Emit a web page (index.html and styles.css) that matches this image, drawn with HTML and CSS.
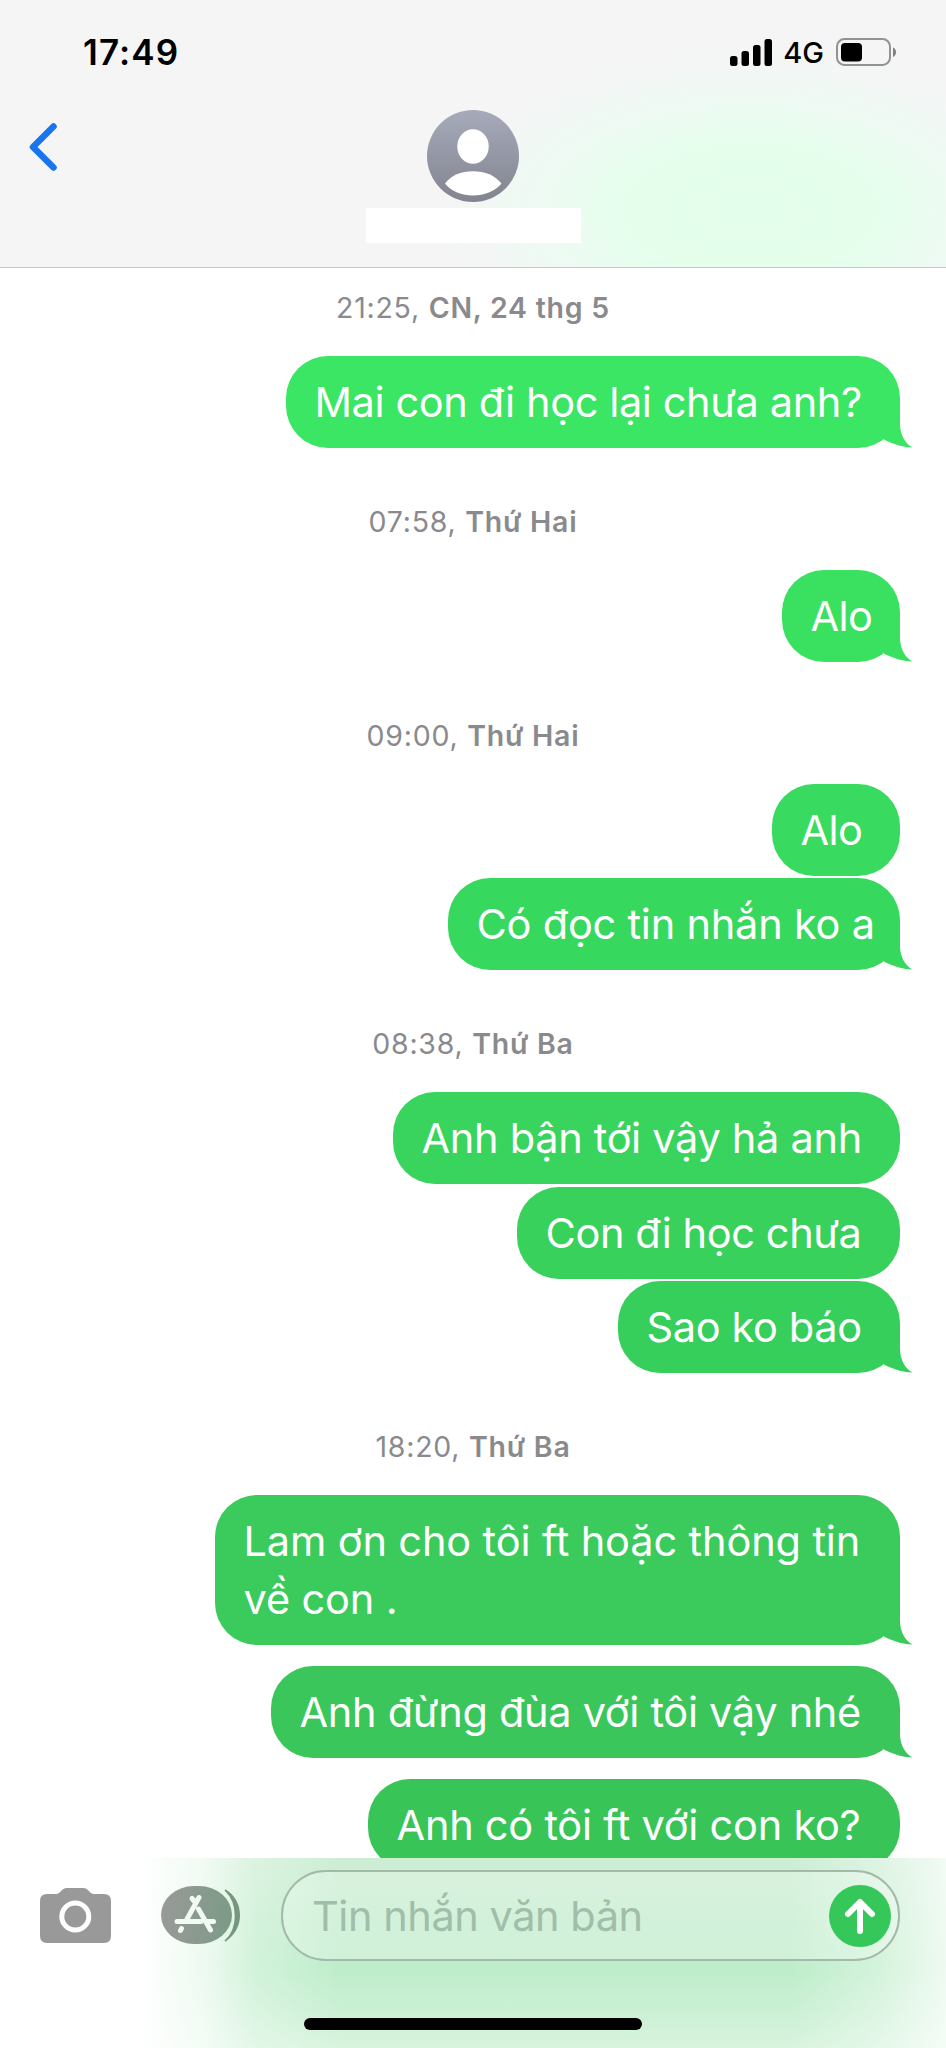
FILE: index.html
```html
<!DOCTYPE html>
<html lang="vi">
<head>
<meta charset="utf-8">
<title>Tin nhắn</title>
<link rel="stylesheet" href="styles.css">
</head>
<body>
<svg width="0" height="0" class="defs" aria-hidden="true">
  <symbol id="tail" viewBox="0 0 43 42"><path d="M30 0V19C30.500 29 35 37.500 42.500 41.500C34 41.500 24 38.500 14.500 34L5 20V0Z"/></symbol>
</svg>
<div class="phone">
  <header class="header">
    <div class="status">
      <span class="time">17:49</span>
      <span class="indicators">
        <svg class="signal" width="43" height="28" viewBox="0 0 43 28"><rect x="0" y="18" width="7.500" height="10" rx="2.500"/><rect x="11.500" y="13" width="7.500" height="15" rx="2.500"/><rect x="23" y="7" width="7.500" height="21" rx="2.500"/><rect x="34.500" y="1" width="7.500" height="27" rx="2.500"/></svg>
        <span class="network">4G</span>
        <svg width="61" height="28" viewBox="0 0 61 28"><rect x="1" y="1" width="53" height="26" rx="7.500" fill="none" stroke="#929292" stroke-width="2"/><rect x="5" y="5" width="21" height="18.500" rx="4" fill="#000"/><path d="M57 9.500C61 11 61 17.500 57 19Z" fill="#808080"/></svg>
      </span>
    </div>
    <div class="nav">
      <svg class="back" width="32" height="52" viewBox="0 0 32 52"><path d="M26.500 5.500L6 26L26.500 46.500" fill="none" stroke="#1a74ee" stroke-width="6.500" stroke-linecap="round" stroke-linejoin="round"/></svg>
      <div class="contact">
        <svg width="92" height="92" viewBox="0 0 92 92">
          <defs><linearGradient id="av" x1="0" y1="0" x2="0" y2="1"><stop offset="0" stop-color="#a6aaba"/><stop offset="1" stop-color="#82858f"/></linearGradient></defs>
          <circle cx="46" cy="46" r="46" fill="url(#av)"/>
          <rect x="30.300" y="19.300" width="31.400" height="34.500" rx="15.700" ry="17" fill="#fff"/>
          <path d="M18 73.500C24 65.500 34 61.300 46 61.300S68 65.500 74.500 73.500C68 81.500 57 85.500 46 85.500S24 81.500 18 73.500Z" fill="#fff"/>
        </svg>
        <div class="name"></div>
      </div>
    </div>
  </header>

  <main class="thread">
    <div class="stamp">21:25, <b>CN, 24 thg 5</b></div>
    <div class="bubble c1">Mai con đi học lại chưa anh?<svg class="tail"><use href="#tail"/></svg></div>
    <div class="stamp">07:58, <b>Thứ Hai</b></div>
    <div class="bubble c2">Alo<svg class="tail"><use href="#tail"/></svg></div>
    <div class="stamp">09:00, <b>Thứ Hai</b></div>
    <div class="bubble c3">Alo</div>
    <div class="bubble c4">Có đọc tin nhắn ko a<svg class="tail"><use href="#tail"/></svg></div>
    <div class="stamp">08:38, <b>Thứ Ba</b></div>
    <div class="bubble c5">Anh bận tới vậy hả anh</div>
    <div class="bubble c6">Con đi học chưa</div>
    <div class="bubble c7">Sao ko báo<svg class="tail"><use href="#tail"/></svg></div>
    <div class="stamp">18:20, <b>Thứ Ba</b></div>
    <div class="bubble c8">Lam ơn cho tôi ft hoặc thông tin<br>về con .<svg class="tail"><use href="#tail"/></svg></div>
    <div class="bubble c9 spaced">Anh đừng đùa với tôi vậy nhé<svg class="tail"><use href="#tail"/></svg></div>
    <div class="bubble c10 spaced">Anh có tôi ft với con ko?</div>
  </main>

  <footer class="composer">
    <div class="tools">
      <svg class="camera" width="72" height="56" viewBox="0 0 72 56"><path d="M7 7H16C21 7 21 1 27 1H43C49 1 49 7 54 7H64Q71 7 71 14V49Q71 56 64 56H7Q0 56 0 49V14Q0 7 7 7Z" fill="#999"/><circle cx="35.300" cy="29.500" r="13.500" fill="none" stroke="#fff" stroke-width="5"/></svg>
      <svg class="apps" width="80" height="58" viewBox="0 0 80 58">
        <defs><linearGradient id="ap"><stop offset="0" stop-color="#999"/><stop offset="1" stop-color="#7c9b86"/></linearGradient></defs>
        <rect width="71" height="58" rx="33" ry="29" fill="url(#ap)"/>
        <path d="M64 4C83 15 83 43 64 55C78 43 78 17 64 4Z" fill="#76967f" stroke="#76967f" stroke-width="1.500"/>
        <g fill="none" stroke="#f2faf4" stroke-width="5" stroke-linecap="round"><path d="M16 35.500H32M45 35.500H52.500M31 12.500L34 16M38 11.500L25.500 34M37.500 23L49.500 44M20.500 42.500L19.500 44.500M27 35.500H40"/></g>
      </svg>
    </div>
    <div class="field">
      <span class="placeholder">Tin nhắn văn bản</span>
      <svg width="62" height="62" viewBox="0 0 62 62"><circle cx="31" cy="31" r="31" fill="#35c759"/><path d="M31 46V17.500M19 29L31 17L43 29" fill="none" stroke="#fff" stroke-width="6" stroke-linecap="round" stroke-linejoin="round"/></svg>
    </div>
    <div class="home"></div>
  </footer>
</div>
</body>
</html>
```
FILE: styles.css
```css
* { box-sizing: border-box; }
body { margin: 0; background: #fff; font-family: Inter, "Noto Sans", sans-serif; }
.defs { display: block; }
.phone { width: 946px; height: 2048px; display: flex; flex-direction: column; overflow: hidden; }

.header {
  height: 268px;
  flex: none;
  border-bottom: 1px solid #c6c8c7;
  background:
    radial-gradient(ellipse 310px 160px at 750px 210px, #e3feeb 0%, #e6feed 45%, rgba(236, 252, 242, .75) 68%, rgba(245, 246, 246, 0) 100%),
    #f5f5f6;
}
.status { height: 104px; display: flex; justify-content: space-between; align-items: center; padding: 0 49px 0 83px; }
.time { font-size: 35px; font-weight: 600; letter-spacing: 1.100px; }
.indicators { display: flex; align-items: center; }
.network { font-size: 29px; font-weight: 500; margin: 0 12px 0 10.500px; }
.nav { display: grid; grid-template-columns: 1fr auto 1fr; padding-top: 6px; }
.back { margin: 11px 0 0 27px; }
.contact { display: flex; flex-direction: column; align-items: center; gap: 6px; }
.name { width: 215px; height: 35px; background: #fff; }

.thread { height: 1590px; flex: none; overflow: hidden; display: flex; flex-direction: column; align-items: flex-end; padding: 22px 46px 0 0; }
.stamp { align-self: stretch; margin: 56.300px 0 30px; padding-left: 46px; height: 36px; flex: none; text-align: center; line-height: 36px; font-size: 28.500px; letter-spacing: .75px; color: #8a8a8e; }
.stamp:first-child { margin-top: 0; }
.stamp b { font-weight: 600; }
.bubble {
  position: relative;
  flex: none;
  min-height: 91.700px;
  padding: 17px 0 16.700px 28.500px;
  border-radius: 42px;
  font-size: 41.500px;
  line-height: 58px;
  color: #fff;
  white-space: nowrap;
}
.bubble + .bubble { margin-top: 2.800px; }
.bubble.spaced { margin-top: 20.900px; }
.tail { position: absolute; right: -13px; bottom: 0; width: 43px; height: 42px; fill: currentColor; }
.c1 { width: 614px; letter-spacing: -.39px; background: #3ae663; }
.c1 .tail { color: #3ae663; }
.c2 { width: 118px; letter-spacing: -.6px; background: #3ae161; }
.c2 .tail { color: #3ae161; }
.c3 { width: 128px; letter-spacing: -.6px; background: #38db5f; }
.c4 { width: 452px; letter-spacing: -.22px; background: #36d95e; }
.c4 .tail { color: #36d95e; }
.c5 { width: 507px; letter-spacing: -.3px; background: #38d45d; }
.c6 { width: 383px; letter-spacing: -.4px; background: #38d15c; }
.c7 { width: 282px; letter-spacing: -.37px; background: #37cf5b; }
.c7 .tail { color: #37cf5b; }
.c8 { width: 685px; letter-spacing: -.13px; background: #3acb5c; }
.c8 .tail { color: #3acb5c; }
.c9 { width: 629px; letter-spacing: -.3px; background: #3ac65a; }
.c9 .tail { color: #3ac65a; }
.c10 { width: 532px; letter-spacing: -.25px; background: #38c457; }

.composer {
  height: 190px;
  flex: none;
  display: grid;
  grid-template: 102px 1fr / 281px 619px;
  background:
    linear-gradient(90deg, #fff 140px, rgba(255,255,255,.72) 205px, rgba(255,255,255,.3) 255px, rgba(255,255,255,0) 340px, rgba(255,255,255,0) 790px, rgba(255,255,255,.35) 880px, rgba(255,255,255,.75) 946px),
    linear-gradient(180deg, #cdeed5 0, #c4edce 60px, #beedca 112px, #caf0d4 150px, #d8f4de 190px);
}
.tools { display: flex; align-items: flex-start; padding: 28px 0 0 40px; gap: 49px; }
.camera { margin-top: 1px; }
.field { height: 91px; margin-top: 12px; border: 2px solid #a3b9a9; border-radius: 45px; background: rgba(255, 255, 255, .26); display: flex; align-items: center; justify-content: space-between; padding: 0 7px 0 29px; }
.placeholder { font-size: 41.500px; letter-spacing: -.45px; color: #a0bea9; white-space: nowrap; }
.home { grid-column: 1 / 3; width: 338px; height: 12px; border-radius: 6px; background: #000; margin: 58px 0 0 304px; }
```
